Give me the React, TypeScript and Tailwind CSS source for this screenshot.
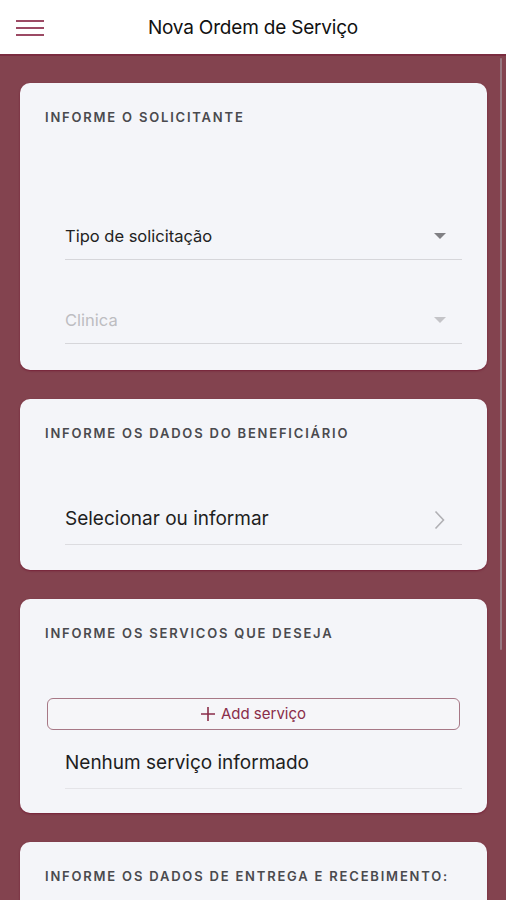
const font = { fontFamily: "Inter, 'Noto Sans', sans-serif" };

function Caret({ light }: { light?: boolean }) {
  return (
    <svg width="12" height="6" viewBox="0 0 12 6" className="shrink-0">
      <path d="M0 0 L12 0 L6 6 Z" fill={light ? "#c4c4c8" : "#808084"} />
    </svg>
  );
}

function Chevron() {
  return (
    <svg width="11" height="20" viewBox="0 0 11 20" className="shrink-0">
      <path d="M1.5 1.5 L9.5 10 L1.5 18.5" fill="none" stroke="#b0b0b4" strokeWidth="1.6" />
    </svg>
  );
}

function Card({ title, children, className = "" }: { title: string; children?: React.ReactNode; className?: string }) {
  return (
    <div className={`rounded-[10px] bg-[#f4f5f9] px-[25px] pt-[26px] shadow-[0_1px_2px_rgba(110,10,40,0.6)] ${className}`}>
      <h2 className="text-[13px] font-semibold uppercase leading-[17px] tracking-[1.8px] text-[#4a4a4e]">{title}</h2>
      {children}
    </div>
  );
}

export default function App() {
  return (
    <div style={font} className="relative h-[900px] w-[506px] overflow-hidden bg-[#83434f]">
      <header className="flex h-[56px] items-center border-b-2 border-[#7a2c40] bg-white px-4 pt-[2px]">
        <div className="flex w-[28px] flex-col gap-[5px]">
          <span className="h-[2px] w-full bg-[#9c4a64]" />
          <span className="h-[2px] w-full bg-[#9c4a64]" />
          <span className="h-[2px] w-full bg-[#9c4a64]" />
        </div>
        <h1 className="flex-1 pr-[28px] text-center text-[19px] font-normal tracking-[-0.2px] text-[#111]">Nova Ordem de Serviço</h1>
      </header>

      <main className="flex flex-col gap-[29px] pl-[20px] pr-[19px] pt-[27px]">
        <Card title="Informe o solicitante" className="pb-[26px]">
          <div className="ml-[20px] mt-[87px] flex h-[47px] items-center justify-between border-b border-[#d6d6da] pr-[16px]">
            <span className="text-[16.5px] text-[#222]">Tipo de solicitação</span>
            <Caret />
          </div>
          <div className="ml-[20px] mt-[37px] flex h-[47px] items-center justify-between border-b border-[#d6d6da] pr-[16px]">
            <span className="text-[16.5px] text-[#bdbdc1]">Clinica</span>
            <Caret light />
          </div>
        </Card>

        <Card title="Informe os dados do beneficiário" className="pb-[25px]">
          <div className="ml-[20px] mt-[53px] flex h-[50px] items-center justify-between border-b border-[#dcdce0] pr-[17px]">
            <span className="text-[19px] text-[#1e1e1e]">Selecionar ou informar</span>
            <Chevron />
          </div>
        </Card>

        <Card title="Informe os servicos que deseja" className="pb-[24px]">
          <button className="mx-[2px] mt-[56px] flex h-[32px] w-[calc(100%-4px)] items-center justify-center gap-[6px] rounded-[6px] border-[1.5px] border-[#a77886] bg-[#f6f6f9] text-[15px] text-[#8a2d49]">
            <svg width="14" height="14" viewBox="0 0 14 14">
              <path d="M7 0 V14 M0 7 H14" stroke="#8a2d49" strokeWidth="1.6" />
            </svg>
            Add serviço
          </button>
          <div className="ml-[20px] flex h-[59px] items-end border-b border-[#e4e4e8] pb-[11px]">
            <span className="text-[19px] text-[#1e1e1e]">Nenhum serviço informado</span>
          </div>
        </Card>

        <Card title="Informe os dados de entrega e recebimento:" className="h-[120px]" />
      </main>

      <div className="absolute left-[500px] top-[58px] h-[592px] w-[2px] rounded bg-[#987780]" />
    </div>
  );
}
